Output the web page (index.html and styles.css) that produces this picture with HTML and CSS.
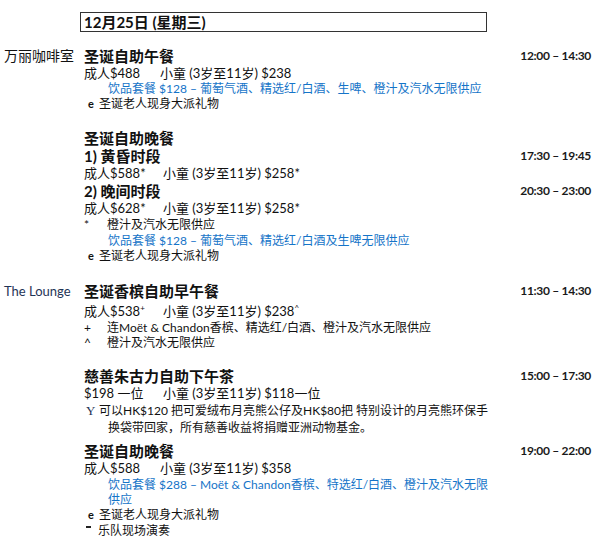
FILE: index.html
```html
<!DOCTYPE html>
<html lang="zh-CN">
<head>
<meta charset="utf-8">
<title>12月25日 (星期三)</title>
<link rel="stylesheet" href="styles.css">
</head>
<body>
<div class="sheet">
  <div class="row head"><div class="c"><div class="datebox">12月25日 (星期三)</div></div></div>

  <div class="row title-row gap15"><div class="v">万丽咖啡室</div><div class="c title">圣诞自助午餐</div><div class="t">12:00 – 14:30</div></div>
  <div class="row lh16"><div class="c price"><span class="adult">成人$488</span>小童 (3岁至11岁) $238</div></div>
  <div class="row lh15"><div class="c small blue indent">饮品套餐 $128 – 葡萄气酒、精选红/白酒、生啤、橙汁及汽水无限供应</div></div>
  <div class="row lh16"><div class="c small"><span class="bul-e">e</span>圣诞老人现身大派礼物</div></div>

  <div class="row title-row gap17"><div class="c title">圣诞自助晚餐</div></div>
  <div class="row title-row"><div class="c title">1) 黄昏时段</div><div class="t">17:30 – 19:45</div></div>
  <div class="row lh17"><div class="c price"><span class="adult wide">成人$588*</span>小童 (3岁至11岁) $258*</div></div>
  <div class="row title-row"><div class="c title">2) 晚间时段</div><div class="t">20:30 – 23:00</div></div>
  <div class="row lh17"><div class="c price"><span class="adult wide">成人$628*</span>小童 (3岁至11岁) $258*</div></div>
  <div class="row lh16"><div class="c small"><span class="bul-sym">*</span>橙汁及汽水无限供应</div></div>
  <div class="row lh15"><div class="c small blue indent">饮品套餐 $128 – 葡萄气酒、精选红/白酒及生啤无限供应</div></div>
  <div class="row lh16"><div class="c small"><span class="bul-e">e</span>圣诞老人现身大派礼物</div></div>

  <div class="row title-row gap18"><div class="v lounge">The Lounge</div><div class="c title">圣诞香槟自助早午餐</div><div class="t">11:30 – 14:30</div></div>
  <div class="row lh18 gap2"><div class="c price"><span class="adult wide">成人$538<sup class="sup">+</sup></span>小童 (3岁至11岁) $238<sup class="sup">^</sup></div></div>
  <div class="row lh15"><div class="c small"><span class="bul-sym">+</span>连Moët &amp; Chandon香槟、精选红/白酒、橙汁及汽水无限供应</div></div>
  <div class="row lh15"><div class="c small"><span class="bul-sym">^</span>橙汁及汽水无限供应</div></div>

  <div class="row title-row gap17"><div class="c title">慈善朱古力自助下午茶</div><div class="t">15:00 – 17:30</div></div>
  <div class="row lh17"><div class="c price"><span class="adult wide">$198 一位</span>小童 (3岁至11岁) $118一位</div></div>
  <div class="row lh18"><div class="c small"><span class="bul-y">Y</span>可以HK$120 把可爱绒布月亮熊公仔及HK$80把 特别设计的月亮熊环保手</div></div>
  <div class="row lh15"><div class="c small indent">换袋带回家，所有慈善收益将捐赠亚洲动物基金。</div></div>

  <div class="row title-row gap7"><div class="c title">圣诞自助晚餐</div><div class="t">19:00 – 22:00</div></div>
  <div class="row lh17"><div class="c price"><span class="adult">成人$588</span>小童 (3岁至11岁) $358</div></div>
  <div class="row lh16"><div class="c small blue indent">饮品套餐 $288 – Moët &amp; Chandon香槟、特选红/白酒、橙汁及汽水无限</div></div>
  <div class="row lh14"><div class="c small blue indent">供应</div></div>
  <div class="row lh16"><div class="c small"><span class="bul-e">e</span>圣诞老人现身大派礼物</div></div>
  <div class="row lh16"><div class="c small"><span class="bul-bar" aria-hidden="true"></span>乐队现场演奏</div></div>
</div>
</body>
</html>
```

FILE: styles.css
```css
html, body {
  margin: 0;
  background: #fff;
}
body {
  padding: 12px 0 0 4px;
  font-family: "Lato", "Noto Sans CJK SC", sans-serif;
  color: #111;
}
.row {
  display: grid;
  grid-template-columns: 80px 406px 101px;
  white-space: nowrap;
}
.v {
  grid-column: 1;
  font-size: 14px;
}
.lounge {
  font-size: 13px;
  color: #1f3456;
}
.c {
  grid-column: 2;
}
.t {
  grid-column: 3;
  text-align: right;
  font-size: 12px;
  font-weight: 700;
  letter-spacing: -0.3px;
  color: #1a1a1a;
}
.head {
  height: 20px;
}
.datebox {
  margin-left: -4px;
  width: 407px;
  height: 20px;
  box-sizing: border-box;
  border: 1px solid #333;
  padding-left: 3px;
  font-size: 15px;
  font-weight: 700;
  line-height: 18px;
}
.title-row { line-height: 18px; }
.title {
  font-size: 15px;
  font-weight: 700;
}
.price { font-size: 13px; }
.small { font-size: 12px; }
.blue { color: #1574c8; }
.indent { padding-left: 24px; }
.adult {
  display: inline-block;
  width: 76px;
}
.adult.wide { width: 79px; }
.sup {
  font-size: 8px;
  line-height: 0;
  vertical-align: 5px;
}
.bul-e {
  display: inline-block;
  width: 11px;
  padding-left: 4px;
  font-size: 11px;
  font-weight: 700;
}
.bul-sym {
  display: inline-block;
  width: 23px;
}
.bul-y {
  display: inline-block;
  width: 13px;
  padding-left: 2px;
  font-family: "Liberation Serif", serif;
  font-size: 13px;
  color: #1f3456;
}
.bul-bar {
  display: inline-block;
  box-sizing: border-box;
  width: 14px;
  height: 10px;
  padding-left: 2px;
  vertical-align: -1px;
  background: linear-gradient(#222, #222) 2px 0 / 5px 2px no-repeat;
}
.lh14 { line-height: 14px; }
.lh15 { line-height: 15px; }
.lh16 { line-height: 16px; }
.lh17 { line-height: 17px; }
.lh18 { line-height: 18px; }
.gap2 { margin-top: 2px; }
.gap7 { margin-top: 7px; }
.gap15 { margin-top: 15px; }
.gap17 { margin-top: 17px; }
.gap18 { margin-top: 18px; }
```
